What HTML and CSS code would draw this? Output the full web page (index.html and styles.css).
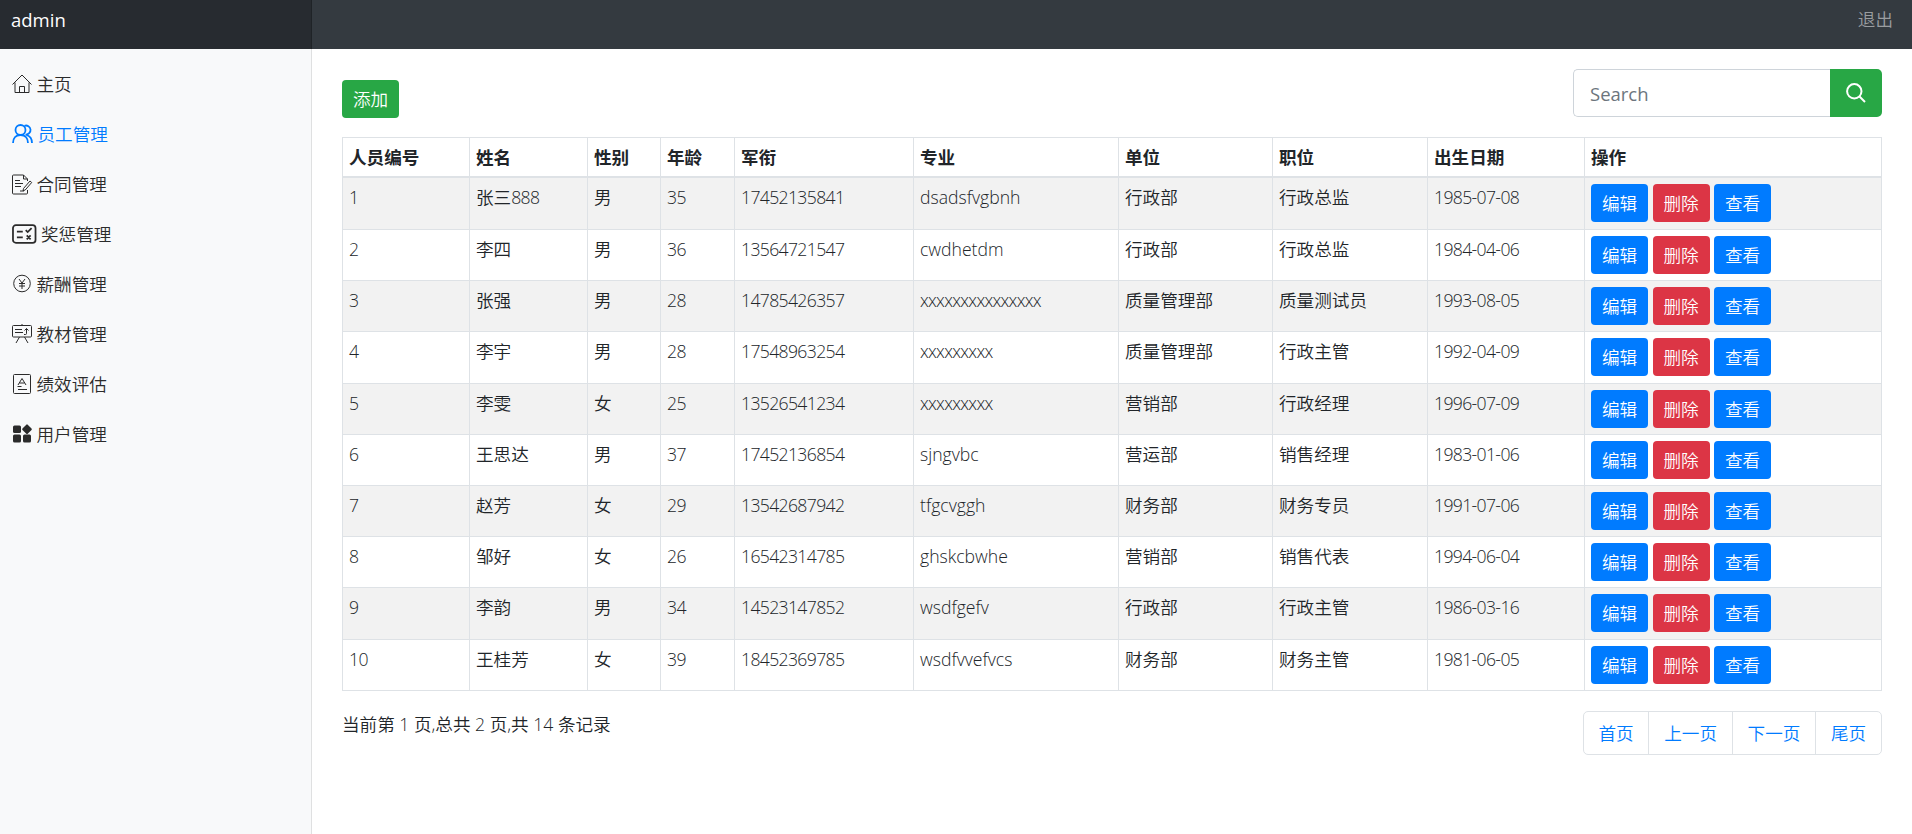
FILE: index.html
```html
<!DOCTYPE html>
<html lang="zh-CN">
<head>
<meta charset="utf-8">
<title>员工管理</title>
<link rel="stylesheet" href="styles.css">
</head>
<body>
<header class="topbar">
  <a class="brand">admin</a>
  <a class="logout">退出</a>
</header>
<div class="layout">
  <nav class="sidebar">
    <a class="nav-link"><svg class="icon thin" viewBox="0 0 20 20"><path d="M.5 10.500 10 1l9.500 9.500M3 8.500v10h14v-10M7.500 18.500v-6h5v6"/></svg>主页</a>
    <a class="nav-link active"><svg class="icon people" viewBox="0 0 21 20"><circle cx="8.500" cy="6" r="5"/><path d="M1 19c0-5 3-8 7.500-8s7.500 3 7.500 8M12.500 1.800a4.500 4.500 0 1 1 1 8.700M14.500 11c3.500 1 5.500 4 5.500 8"/></svg>员工管理</a>
    <a class="nav-link"><svg class="icon thin" viewBox="0 0 20 20"><path d="M15.500 7V5l-4-4h-10Q.500 1 .500 2v17q0 1 1 1h13q1 0 1-1v-3M11.500 1v4h4M3 6.500h5M3 9.500h8M3 12.500h6M8 17h4M11.500 14.500l6.500-7.500 1.700 1.500-6.500 7.500-2.200.700z"/></svg>合同管理</a>
    <a class="nav-link"><svg class="icon wide" viewBox="0 0 25 20"><rect x="1" y="1" width="23" height="18" rx="3"/><path d="M5 7.500h6M5 13.500h6M14 6l2 2 4-4M15 11.500l4 4M19 11.500l-4 4"/></svg>奖惩管理</a>
    <a class="nav-link"><svg class="icon thin" viewBox="0 0 20 20"><circle cx="10" cy="9.500" r="8.300"/><path d="m7 5 3 4 3-4M10 9v6M7 9.500h6M7 12h6"/></svg>薪酬管理</a>
    <a class="nav-link"><svg class="icon thin" viewBox="0 0 20 20"><rect x=".500" y="1.500" width="19" height="11.500" rx="1"/><path d="M10 0v1.500M7.500 13 4 19M12.500 13l3.500 6M3 5.500h7M3 8.500h8M12 10.500h1.500q1 0 1-1V4.500M12.500 6.500l2-2 2 2"/></svg>教材管理</a>
    <a class="nav-link"><svg class="icon thin" viewBox="0 0 20 20"><rect x="1.500" y=".500" width="17" height="19" rx="1"/><path d="m6 11 4-6.500 4 6.500M7.500 9h5M5.500 12.500h4M6 15.500h9"/></svg>绩效评估</a>
    <a class="nav-link"><svg class="icon solid" viewBox="0 0 20 20"><rect x="1" y="1.500" width="8" height="7.500" rx="1.500"/><rect x="1" y="10.500" width="8" height="8" rx="1.500"/><rect x="11" y="10.500" width="8" height="8" rx="1.500"/><rect x="11.300" y="1.500" width="7.400" height="7.400" rx="1" transform="rotate(45 15 5.200)"/></svg>用户管理</a>
  </nav>
  <main class="content">
    <div class="toolbar">
      <button class="btn btn-success">添加</button>
      <form class="search">
        <input class="search-input" type="text" placeholder="Search">
        <button class="search-btn" type="button"><svg class="search-icon" viewBox="0 0 20 20"><circle cx="8.300" cy="8.300" r="7.200"/><path d="m13.500 13.500 5.500 5.500"/></svg></button>
      </form>
    </div>
    <table class="table">
      <colgroup><col class="c-id"><col class="c-name"><col class="c-sex"><col class="c-age"><col class="c-rank"><col class="c-major"><col class="c-unit"><col class="c-post"><col class="c-birth"><col class="c-act"></colgroup>
      <thead><tr><th>人员编号</th><th>姓名</th><th>性别</th><th>年龄</th><th>军衔</th><th>专业</th><th>单位</th><th>职位</th><th>出生日期</th><th>操作</th></tr></thead>
      <tbody>
        <tr><td>1</td><td>张三<span class="num">888</span></td><td>男</td><td class="num">35</td><td class="num">17452135841</td><td>dsadsfvgbnh</td><td>行政部</td><td>行政总监</td><td class="num">1985-07-08</td><td><div class="actions"><a class="btn btn-primary">编辑</a><a class="btn btn-danger">删除</a><a class="btn btn-primary">查看</a></div></td></tr>
        <tr><td>2</td><td>李四</td><td>男</td><td class="num">36</td><td class="num">13564721547</td><td>cwdhetdm</td><td>行政部</td><td>行政总监</td><td class="num">1984-04-06</td><td><div class="actions"><a class="btn btn-primary">编辑</a><a class="btn btn-danger">删除</a><a class="btn btn-primary">查看</a></div></td></tr>
        <tr><td>3</td><td>张强</td><td>男</td><td class="num">28</td><td class="num">14785426357</td><td class="tight">xxxxxxxxxxxxxxx</td><td>质量管理部</td><td>质量测试员</td><td class="num">1993-08-05</td><td><div class="actions"><a class="btn btn-primary">编辑</a><a class="btn btn-danger">删除</a><a class="btn btn-primary">查看</a></div></td></tr>
        <tr><td>4</td><td>李宇</td><td>男</td><td class="num">28</td><td class="num">17548963254</td><td class="tight">xxxxxxxxx</td><td>质量管理部</td><td>行政主管</td><td class="num">1992-04-09</td><td><div class="actions"><a class="btn btn-primary">编辑</a><a class="btn btn-danger">删除</a><a class="btn btn-primary">查看</a></div></td></tr>
        <tr><td>5</td><td>李雯</td><td>女</td><td class="num">25</td><td class="num">13526541234</td><td class="tight">xxxxxxxxx</td><td>营销部</td><td>行政经理</td><td class="num">1996-07-09</td><td><div class="actions"><a class="btn btn-primary">编辑</a><a class="btn btn-danger">删除</a><a class="btn btn-primary">查看</a></div></td></tr>
        <tr><td>6</td><td>王思达</td><td>男</td><td class="num">37</td><td class="num">17452136854</td><td>sjngvbc</td><td>营运部</td><td>销售经理</td><td class="num">1983-01-06</td><td><div class="actions"><a class="btn btn-primary">编辑</a><a class="btn btn-danger">删除</a><a class="btn btn-primary">查看</a></div></td></tr>
        <tr><td>7</td><td>赵芳</td><td>女</td><td class="num">29</td><td class="num">13542687942</td><td>tfgcvggh</td><td>财务部</td><td>财务专员</td><td class="num">1991-07-06</td><td><div class="actions"><a class="btn btn-primary">编辑</a><a class="btn btn-danger">删除</a><a class="btn btn-primary">查看</a></div></td></tr>
        <tr><td>8</td><td>邹好</td><td>女</td><td class="num">26</td><td class="num">16542314785</td><td>ghskcbwhe</td><td>营销部</td><td>销售代表</td><td class="num">1994-06-04</td><td><div class="actions"><a class="btn btn-primary">编辑</a><a class="btn btn-danger">删除</a><a class="btn btn-primary">查看</a></div></td></tr>
        <tr><td>9</td><td>李韵</td><td>男</td><td class="num">34</td><td class="num">14523147852</td><td>wsdfgefv</td><td>行政部</td><td>行政主管</td><td class="num">1986-03-16</td><td><div class="actions"><a class="btn btn-primary">编辑</a><a class="btn btn-danger">删除</a><a class="btn btn-primary">查看</a></div></td></tr>
        <tr><td class="num">10</td><td>王桂芳</td><td>女</td><td class="num">39</td><td class="num">18452369785</td><td>wsdfvvefvcs</td><td>财务部</td><td>财务主管</td><td class="num">1981-06-05</td><td><div class="actions"><a class="btn btn-primary">编辑</a><a class="btn btn-danger">删除</a><a class="btn btn-primary">查看</a></div></td></tr>
      </tbody>
    </table>
    <div class="footer">
      <p class="summary">当前第 1 页,总共 2 页,共 14 条记录</p>
      <div class="pagination"><a class="page-link">首页</a><a class="page-link">上一页</a><a class="page-link">下一页</a><a class="page-link">尾页</a></div>
    </div>
  </main>
</div>
</body>
</html>
```
FILE: styles.css
```css
* { box-sizing: border-box; }
body {
  margin: 0;
  height: 834px;
  overflow: hidden;
  display: flex;
  flex-direction: column;
  background: #fff;
  color: #212529;
  font: 350 17.6px/26.25px "Open Sans", "Noto Sans CJK SC", sans-serif;
}
.topbar {
  height: 49px;
  flex: none;
  display: flex;
  justify-content: space-between;
  background: #343a40;
}
.brand {
  width: 312px;
  padding: 7px 11px;
  background: #272b30;
  box-shadow: inset -1px 0 0 #1f2327;
  color: #fff;
  font-weight: 400;
  font-size: 18.5px;
}
.logout { padding: 6px 19px; color: #9a9da0; }
.layout { flex: 1; display: flex; min-height: 0; }
.sidebar {
  width: 312px;
  flex: none;
  padding-top: 10px;
  background: #f8f9fa;
  box-shadow: inset -1px 0 0 #dfe0e1;
}
.nav-link {
  height: 50px;
  padding-left: 12px;
  display: flex;
  align-items: center;
  gap: 4.500px;
  color: #2b2b2b;
}
.nav-link.active { color: #007bff; }
.icon { width: 20px; height: 20px; fill: none; stroke: currentColor; stroke-width: 1; overflow: visible; }
.icon.people { width: 21px; stroke-width: 1.8; }
.icon.wide { width: 24.500px; stroke-width: 1.8; }
.icon.solid { fill: currentColor; stroke: none; }
.content { flex: 1; padding: 20px 30px 0; }
.toolbar { height: 68px; display: flex; justify-content: space-between; align-items: flex-start; }
.btn {
  width: 57px;
  height: 38px;
  border: 0;
  border-radius: 4px;
  padding: 0;
  color: #fff;
  font: 350 17.6px/38px "Noto Sans CJK SC", sans-serif;
  text-align: center;
}
.btn-success { margin-top: 11px; background: #28a745; }
.btn-primary { background: #007bff; }
.btn-danger { background: #dc3545; }
.search { display: flex; margin: 0; }
.search-input {
  width: 257px;
  height: 48px;
  padding: 0 16px;
  border: 1px solid #ced4da;
  border-right: 0;
  border-radius: 5px 0 0 5px;
  font: 400 18.5px "Open Sans", sans-serif;
}
.search-input::placeholder { color: #6c757d; }
.search-btn {
  width: 52px;
  height: 48px;
  padding: 0;
  border: 0;
  border-radius: 0 5px 5px 0;
  background: #28a745;
  display: flex;
  align-items: center;
  justify-content: center;
}
.search-icon { width: 20px; height: 20px; fill: none; stroke: #fff; stroke-width: 2; }
.table {
  width: 1540px;
  table-layout: fixed;
  border-collapse: separate;
  border-spacing: 0;
  border-top: 1px solid #dee2e6;
  border-left: 1px solid #dee2e6;
}
.c-id { width: 127px; }
.c-name { width: 118px; }
.c-sex { width: 73px; }
.c-age { width: 74px; }
.c-rank { width: 179px; }
.c-major { width: 205px; }
.c-unit { width: 154px; }
.c-post { width: 155px; }
.c-birth { width: 157px; }
.c-act { width: 297px; }
.table th {
  height: 40px;
  padding: 0 6px;
  border-right: 1px solid #dee2e6;
  border-bottom: 2px solid #dee2e6;
  text-align: left;
  font-weight: 700;
}
.table td {
  height: 51.2px;
  padding: 6px 6px 0;
  border-right: 1px solid #dee2e6;
  border-bottom: 1px solid #dee2e6;
  vertical-align: top;
}
.table tbody tr:first-child td { height: 52px; }
.table tbody tr:nth-child(odd) { background: #f2f2f2; }
.num { letter-spacing: -0.65px; }
.tight { letter-spacing: -0.7px; }
.actions { display: flex; gap: 4.500px; }
.footer { display: flex; justify-content: space-between; padding-top: 20px; }
.summary { margin: 0; }
.pagination { display: flex; height: 44px; border: 1px solid #dee2e6; border-radius: 5px; }
.page-link { padding: 0 14.800px; line-height: 42px; color: #007bff; }
.page-link + .page-link { border-left: 1px solid #dee2e6; }
```
